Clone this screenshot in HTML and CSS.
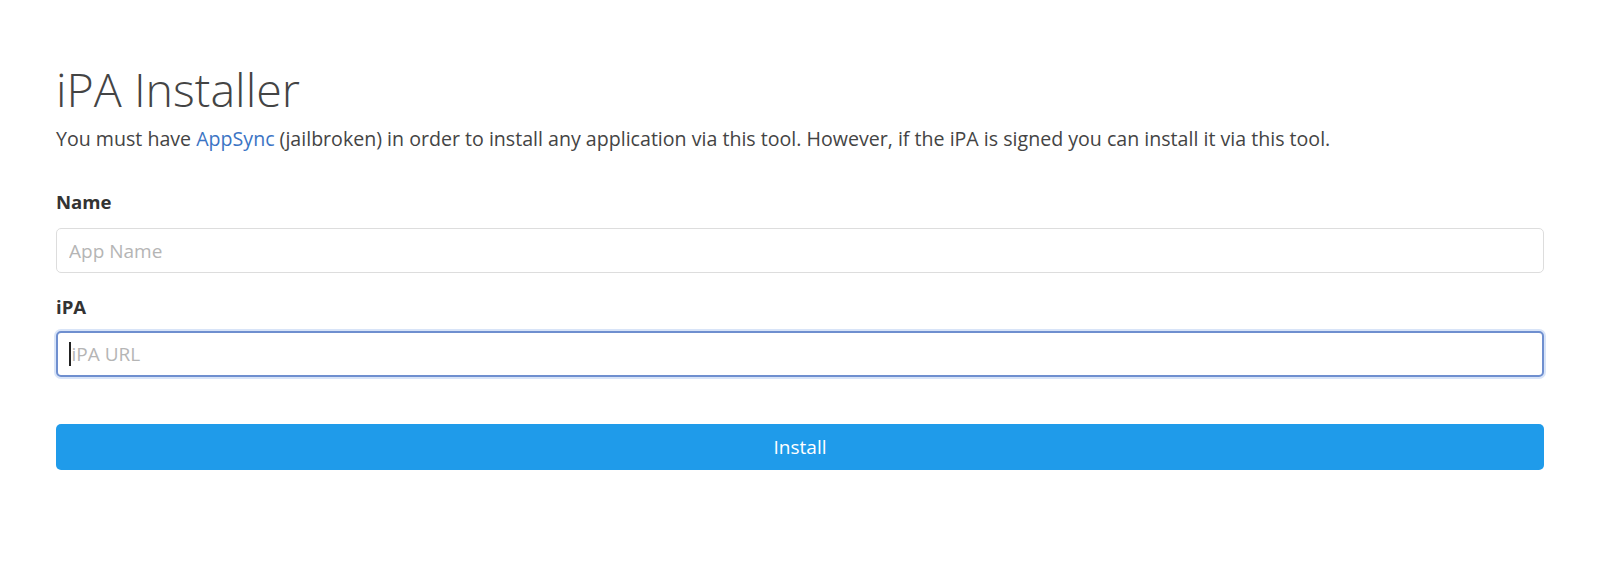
FILE: index.html
```
<!DOCTYPE html>
<html>
<head>
<meta charset="utf-8">
<link rel="stylesheet" href="styles.css">
</head>
<body>
<main class="container">
  <h1 class="title">iPA Installer</h1>
  <p class="lead">You must have <a href="#" class="link">AppSync</a> (jailbroken) in order to install any application via this tool. However, if the iPA is signed you can install it via this tool.</p>
  <form class="form">
    <div class="group">
      <label class="label">Name</label>
      <input class="field" type="text" placeholder="App Name">
    </div>
    <div class="group">
      <label class="label">iPA</label>
      <div class="field focus"><span class="caret"></span><span class="ph">iPA URL</span></div>
    </div>
    <button class="btn" type="button">Install</button>
  </form>
</main>
</body>
</html>
```
FILE: styles.css
```
* { box-sizing: border-box; }
html, body { margin: 0; padding: 0; background: #fff; }
body {
  font-family: "Open Sans", "Noto Sans", sans-serif;
  color: #3a3a3a;
  font-size: 19.6px;
}
.container {
  padding: 59px 56px 0 56px;
}
.title {
  font-weight: 300;
  font-size: 46.6px;
  line-height: 60px;
  margin: 0;
  color: #444;
}
.lead {
  margin: 6px 0 0 0;
  line-height: 28px;
  font-size: 19.6px;
  color: #444;
}
.link { color: #3b74c4; text-decoration: none; }
.form { margin-top: 36px; display: flex; flex-direction: column; }
.group { display: flex; flex-direction: column; margin-bottom: 19px; }
.group + .group { margin-top: 2px; }
.group + .group .label { margin-bottom: 11px; }
.label { font-weight: 700; font-size: 18.6px; line-height: 26px; margin-bottom: 13px; color: #333; }
.field {
  height: 45px;
  border: 1px solid #ddd;
  border-radius: 5px;
  padding: 0 12px;
  font-family: inherit;
  font-size: 19px;
  color: #333;
  outline: none;
  width: 100%;
  display: flex;
  align-items: center;
  background: #fff;
}
.field::placeholder { color: #b5b5b5; }
.focus {
  height: 46px;
  border: 2px solid #6f8fcf;
  box-shadow: 0 0 0 2px #d8e4f8;
  padding-left: 11px;
}
.caret { width: 1.5px; height: 24px; background: #222; margin-right: 1px; }
.ph { color: #b5b5b5; }
.btn {
  margin-top: 28px;
  height: 46px;
  border: none;
  border-radius: 5px;
  background: #1f9bea;
  color: #fff;
  font-family: inherit;
  font-size: 19px;
  width: 100%;
}
```
